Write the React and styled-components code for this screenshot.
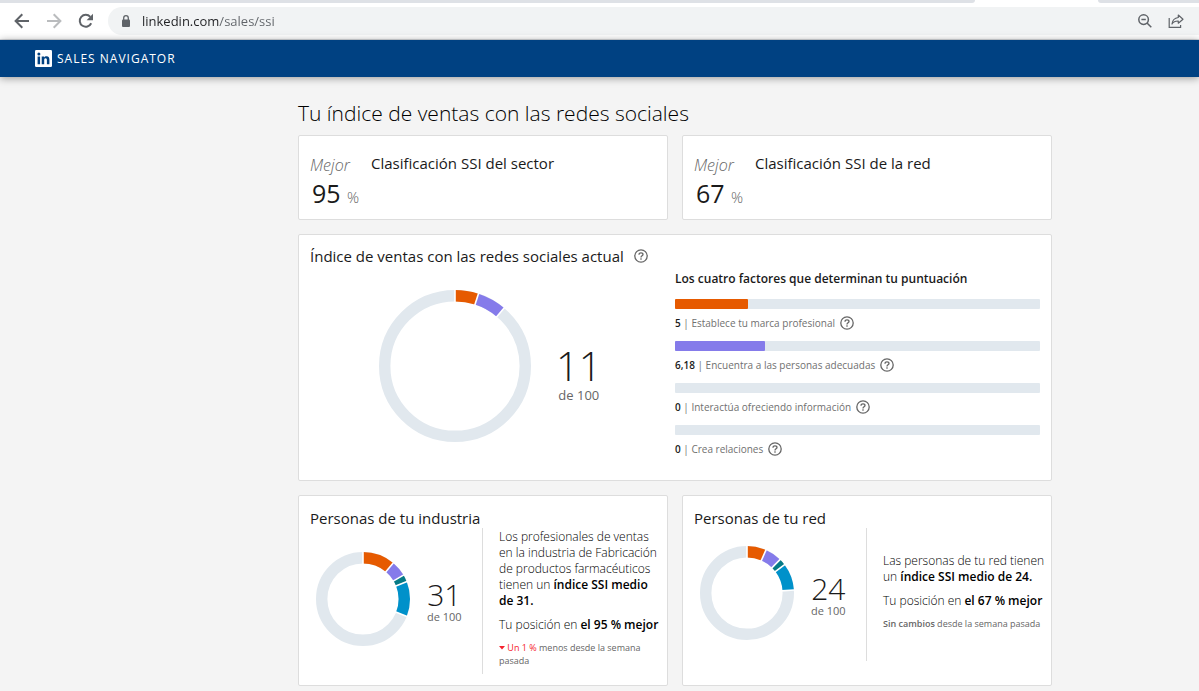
import React from 'react'
import styled, { createGlobalStyle } from 'styled-components'

const GlobalStyle = createGlobalStyle`
  * {
    box-sizing: border-box;
  }

  body {
    margin: 0;
    background: #f4f4f4;
    color: #1a1a1a;
    font-family: 'Open Sans', 'Noto Sans', sans-serif;
  }

  h1, h2, h3, p {
    margin: 0;
    font-weight: 400;
  }
`

const colors = {
    brand: '#e65a00',
    people: '#857bea',
    insights: '#057a86',
    relations: '#0091ca',
    track: '#e1e8ee',
}

const factors = [
    { score: '5', value: 5, label: 'Establece tu marca profesional', color: colors.brand },
    { score: '6,18', value: 6.18, label: 'Encuentra a las personas adecuadas', color: colors.people },
    { score: '0', value: 0, label: 'Interactúa ofreciendo información', color: colors.insights },
    { score: '0', value: 0, label: 'Crea relaciones', color: colors.relations },
]

const currentParts = [
    { value: 5, color: colors.brand },
    { value: 6.18, color: colors.people },
]

const industryParts = [
    { value: 11.1, color: colors.brand },
    { value: 5.4, color: colors.people },
    { value: 2.5, color: colors.insights },
    { value: 12, color: colors.relations },
]

const networkParts = [
    { value: 6.6, color: colors.brand },
    { value: 5.8, color: colors.people },
    { value: 2.3, color: colors.insights },
    { value: 9.3, color: colors.relations },
]

const Donut = ({ size, parts, label }) => {
    const outer = size / 2
    const stroke = 11.4
    const r = outer - stroke / 2
    let total = 0
    const arcs = parts.map((part) => {
        const arc = { ...part, start: total }
        total += part.value
        return arc
    })
    const cuts = [...arcs.map((arc) => arc.start), total]

    return (
        <DonutSvg width={size} height={size} viewBox={`0 0 ${size} ${size}`} role="img" aria-label={label}>
            <g transform={`rotate(-90 ${outer} ${outer})`} fill="none" strokeWidth={stroke}>
                <circle cx={outer} cy={outer} r={r} stroke={colors.track} />
                {arcs.map((arc) => (
                    <circle
                        key={arc.start}
                        cx={outer}
                        cy={outer}
                        r={r}
                        pathLength="100"
                        stroke={arc.color}
                        strokeDasharray={`${arc.value} ${100 - arc.value}`}
                        strokeDashoffset={-arc.start}
                    />
                ))}
            </g>
            {cuts.map((cut) => (
                <line
                    key={cut}
                    x1={outer}
                    x2={outer}
                    y1="-1"
                    y2={stroke + 1}
                    stroke="#fff"
                    strokeWidth="1.6"
                    transform={`rotate(${cut * 3.6} ${outer} ${outer})`}
                />
            ))}
        </DonutSvg>
    )
}

const Help = ({ label }) => (
    <HelpButton type="button" aria-label={label}>
        <svg width="14" height="14" viewBox="0 0 14 14" fill="none" stroke="#666" strokeWidth="1.3">
            <circle cx="7" cy="7" r="6.2" />
            <path d="M5 5.7C5 4.4 5.9 3.8 7 3.8s2 .6 2 1.7c0 1.3-2 1.4-2 2.9" />
            <path d="M7 9.3v1.4" />
        </svg>
    </HelpButton>
)

const Browser = () => (
    <BrowserChrome>
        <TabStrip>
            <TabRest $side="right" />
            <ActiveTab />
            <TabRest $side="left" />
        </TabStrip>
        <Toolbar>
            <ToolButton type="button" aria-label="Atrás">
                <svg width="16" height="16" viewBox="0 0 16 16" fill="none" stroke="#5f6368" strokeWidth="2">
                    <path d="M15 8H2M8.3 1.3 1.6 8l6.7 6.7" />
                </svg>
            </ToolButton>
            <ToolButton type="button" aria-label="Adelante">
                <svg width="16" height="16" viewBox="0 0 16 16" fill="none" stroke="#babcbe" strokeWidth="2">
                    <path d="M1 8h13M7.7 1.3 14.4 8l-6.7 6.7" />
                </svg>
            </ToolButton>
            <ToolButton type="button" aria-label="Volver a cargar">
                <svg width="16" height="16" viewBox="0 0 16 16">
                    <path d="M13.2 10.3A6 6 0 1 1 12.3 3.8" fill="none" stroke="#5f6368" strokeWidth="2" />
                    <path d="M15 .8v6.4H8.6z" fill="#5f6368" />
                </svg>
            </ToolButton>
            <AddressBar>
                <svg width="10" height="13" viewBox="0 0 10 13">
                    <rect x="1" y="4.5" width="8" height="7.5" rx="1" fill="#5f6368" />
                    <path d="M2.7 5V3a2.3 2.3 0 0 1 4.6 0v2" fill="none" stroke="#5f6368" strokeWidth="1.3" />
                </svg>
                <AddressInput aria-label="Dirección" defaultValue="linkedin.com/sales/ssi" spellCheck="false" />
                <ToolButton type="button" aria-label="Zoom">
                    <svg width="14" height="14" viewBox="0 0 14 14" fill="none" stroke="#5f6368" strokeWidth="1.5">
                        <circle cx="5.6" cy="5.6" r="4.8" />
                        <path d="M3.4 5.6h4.4M9 9l4.3 4.3" />
                    </svg>
                </ToolButton>
                <ToolButton type="button" aria-label="Compartir">
                    <svg width="16" height="14" viewBox="0 0 16 14" fill="none" stroke="#5f6368" strokeWidth="1.2">
                        <path d="M1.2 4v9.3h11.4v-2.2" />
                        <path d="M10.3 1 15 5.2l-4.7 4V7c-3-.1-5 .9-6.3 3 .4-3.6 2.6-6 6.3-6.5z" strokeLinejoin="round" />
                    </svg>
                </ToolButton>
            </AddressBar>
        </Toolbar>
    </BrowserChrome>
)

const Rank = ({ value, title }) => (
    <RankCard>
        <RankValue>
            <Best>Mejor</Best>
            <Percent>
                {value} <small>%</small>
            </Percent>
        </RankValue>
        <CardTitle>{title}</CardTitle>
    </RankCard>
)

const People = ({ title, score, parts, children }) => (
    <PeopleCard>
        <CardTitle>{title}</CardTitle>
        <PeopleBody>
            <PeopleChart>
                <Donut size={94} parts={parts} label={`${title}: ${score} de 100`} />
                <Score>
                    <ScoreNumber>{score}</ScoreNumber>
                    <ScoreLabel>de 100</ScoreLabel>
                </Score>
            </PeopleChart>
            <PeopleText>{children}</PeopleText>
        </PeopleBody>
    </PeopleCard>
)

const App = () => (
    <>
        <GlobalStyle />
        <Browser />
        <NavBar>
            <Brand href="#">
                <svg width="17" height="17" viewBox="0 0 17 17">
                    <rect width="17" height="17" rx="1.2" fill="#fff" />
                    <g fill="#004182">
                        <circle cx="3.9" cy="3.9" r="1.5" />
                        <path d="M2.6 6.4h2.5v7.9H2.6zM6.7 6.4h2.4v1.1c.5-.8 1.3-1.3 2.4-1.3 2.4 0 2.9 1.6 2.9 3.6v4.5h-2.5v-4c0-1-.1-2-1.3-2s-1.4.9-1.4 2v4H6.7z" />
                    </g>
                </svg>
                Sales Navigator
            </Brand>
        </NavBar>
        <Page>
            <Content>
                <PageTitle>Tu índice de ventas con las redes sociales</PageTitle>
                <Pair>
                    <Rank value="95" title="Clasificación SSI del sector" />
                    <Rank value="67" title="Clasificación SSI de la red" />
                </Pair>
                <CurrentCard>
                    <TitleRow>
                        <CardTitle>Índice de ventas con las redes sociales actual</CardTitle>
                        <Help label="Ayuda sobre el índice" />
                    </TitleRow>
                    <CurrentBody>
                        <CurrentChart>
                            <Donut size={152} parts={currentParts} label="11 de 100" />
                            <Score $large>
                                <ScoreNumber $large>11</ScoreNumber>
                                <ScoreLabel $large>de 100</ScoreLabel>
                            </Score>
                        </CurrentChart>
                        <Factors>
                            <FactorsTitle>Los cuatro factores que determinan tu puntuación</FactorsTitle>
                            {factors.map(({ score, value, label, color }) => (
                                <Factor key={label}>
                                    <Track>
                                        <Fill $color={color} style={{ width: `${(value / 25) * 100}%` }} />
                                    </Track>
                                    <FactorLabel>
                                        <span>
                                            <b>{score}</b> | {label}
                                        </span>
                                        <Help label={`Ayuda: ${label}`} />
                                    </FactorLabel>
                                </Factor>
                            ))}
                        </Factors>
                    </CurrentBody>
                </CurrentCard>
                <Pair>
                    <People title="Personas de tu industria" score="31" parts={industryParts}>
                        <p>
                            Los profesionales de ventas en la industria de Fabricación de productos
                            farmacéuticos tienen un <b>índice SSI medio de&nbsp;31.</b>
                        </p>
                        <p>
                            Tu posición en <b>el 95 % mejor</b>
                        </p>
                        <Trend>
                            <Down>
                                <svg width="6" height="4" viewBox="0 0 6 4">
                                    <path d="M0 0h6L3 3.5z" fill="currentColor" />
                                </svg>{' '}
                                Un 1 %
                            </Down>{' '}
                            menos desde la semana pasada
                        </Trend>
                    </People>
                    <People title="Personas de tu red" score="24" parts={networkParts}>
                        <p>
                            Las personas de tu red tienen un&nbsp;<b>índice SSI medio de 24.</b>
                        </p>
                        <p>
                            Tu posición en <b>el 67 % mejor</b>
                        </p>
                        <Trend>
                            <b>Sin cambios</b> desde la semana pasada
                        </Trend>
                    </People>
                </Pair>
            </Content>
        </Page>
    </>
)

export default App


const BrowserChrome = styled.div`
    background: #fff;
    border-bottom: 1px solid #dadce0;
`

const TabStrip = styled.div`
    display: flex;
    height: 3px;
`

const TabRest = styled.div`
    flex: ${(props) => (props.$side === 'right' ? '1' : '0 0 101px')};
    background: #dee1e6;
    border-radius: ${(props) => (props.$side === 'right' ? '0 0 6px 0' : '0 0 0 6px')};
`

const ActiveTab = styled.div`
    flex: 0 0 123px;
`

const Toolbar = styled.div`
    display: flex;
    align-items: center;
    gap: 16px;
    height: 36px;
    padding-left: 14px;
`

const ToolButton = styled.button`
    display: flex;
    padding: 0;
    border: none;
    background: none;
    cursor: pointer;
`

const AddressBar = styled.div`
    flex: 1;
    display: flex;
    align-items: center;
    gap: 16px;
    height: 28px;
    margin-left: -2px;
    padding: 0 15px 0 13px;
    border-radius: 14px 0 0 14px;
    background: #f1f3f4;
`

/* domain is darker than the path */
const AddressInput = styled.input`
    flex: 1;
    min-width: 0;
    margin-left: -5px;
    padding: 0;
    border: none;
    outline: none;
    background: linear-gradient(90deg, #202124 77px, #5f6368 77px);
    background-clip: text;
    color: transparent;
    font: 13px 'Open Sans', sans-serif;
`

const NavBar = styled.nav`
    position: relative;
    display: flex;
    align-items: center;
    height: 37px;
    padding: 0 35px;
    background: #004182;
    box-shadow: 0 1px 8px rgba(0, 0, 0, 0.4);
`

const Brand = styled.a`
    display: flex;
    align-items: center;
    gap: 5px;
    color: #fff;
    font-size: 12px;
    letter-spacing: 1px;
    text-transform: uppercase;
    text-decoration: none;
`

const Page = styled.main`
    display: grid;
    grid-template-columns: minmax(12px, 298fr) minmax(0, 754px) minmax(12px, 147fr);
    padding: 22px 0 5px;
`

const Content = styled.div`
    grid-column: 2;
    display: flex;
    flex-direction: column;
    gap: 14px;
`

const PageTitle = styled.h1`
    margin-bottom: -6px;
    color: #000;
    font-size: 21px;
    font-weight: 300;
    line-height: 28px;
`

const Pair = styled.div`
    display: grid;
    grid-template-columns: 1fr 1fr;
    gap: 14px;
`

const Card = styled.section`
    padding: 12px 11px 11px;
    border: 1px solid #ddd;
    border-radius: 2px;
    background: #fff;
`

const CardTitle = styled.h2`
    font-size: 15px;
    line-height: 20px;
`

const RankCard = styled(Card)`
    display: flex;
    gap: 9px;
    padding: 17px 11px 11px;
`

const RankValue = styled.div`
    width: 52px;
    white-space: nowrap;
`

const Best = styled.div`
    color: #666;
    font-size: 16px;
    font-style: italic;
    font-weight: 300;
    line-height: 25px;
`

const Percent = styled.div`
    padding-left: 2px;
    font-size: 25px;
    line-height: 30px;

    small {
        color: #666;
        font-size: 15px;
        font-weight: 300;
        line-height: 1;
    }
`

const CurrentCard = styled(Card)`
    padding-top: 11px;
    padding-bottom: 13px;
`

const TitleRow = styled.div`
    display: flex;
    align-items: center;
    gap: 10px;
`

const HelpButton = styled.button`
    display: flex;
    padding: 0;
    border: none;
    background: none;
    cursor: pointer;
`

const CurrentBody = styled.div`
    display: grid;
    grid-template-columns: 1fr 1fr;
`

const CurrentChart = styled.div`
    display: flex;
    align-items: center;
    align-self: start;
    gap: 25px;
    padding: 24px 0 0 69px;
`

const DonutSvg = styled.svg`
    flex: none;
`

const Score = styled.div`
    padding-top: ${(props) => (props.$large ? '18px' : '6px')};
    text-align: center;
    white-space: nowrap;
`

const ScoreNumber = styled.div`
    font-size: ${(props) => (props.$large ? '40px' : '30px')};
    font-weight: 300;
    line-height: ${(props) => (props.$large ? '40px' : '30px')};
`

const ScoreLabel = styled.div`
    color: #666;
    font-size: ${(props) => (props.$large ? '13px' : '11px')};
    line-height: ${(props) => (props.$large ? '18px' : '14px')};
`

const Factors = styled.div`
    padding-top: 3px;
`

const FactorsTitle = styled.h3`
    margin-bottom: 10px;
    font-size: 12px;
    font-weight: 600;
    line-height: 20px;
`

const Factor = styled.div`
    padding-bottom: 8px;
`

const Track = styled.div`
    height: 10px;
    border-radius: 1px;
    background: ${colors.track};
`

const Fill = styled.div`
    height: 100%;
    border-radius: 1px;
    background: ${(props) => props.$color};
`

const FactorLabel = styled.div`
    display: flex;
    align-items: center;
    gap: 5px;
    padding-top: 4px;
    color: #707070;
    font-size: 10px;
    line-height: 20px;

    b {
        color: #1a1a1a;
        font-weight: 600;
    }
`

const PeopleCard = styled(Card)`
    padding-right: 4px;
`

const PeopleBody = styled.div`
    display: flex;
    min-height: 133px;
`

const PeopleChart = styled.div`
    flex: 0 0 172px;
    display: flex;
    align-items: center;
    gap: 17px;
    padding: 0 0 4px 6px;
`

const PeopleText = styled.div`
    flex: 1;
    display: flex;
    flex-direction: column;
    justify-content: center;
    gap: 8px;
    padding: 1px 0 7px 16px;
    border-left: 1px solid #ddd;
    color: #000;
    font-size: 12px;
    line-height: 16px;

    p {
        font-weight: 300;
    }

    b {
        font-weight: 600;
    }
`

const Trend = styled.p`
    && {
        color: #666;
        font-size: 9px;
        font-weight: 400;
        line-height: 13px;
    }
`

const Down = styled.span`
    color: #f5222d;

    svg {
        vertical-align: 1px;
    }
`
